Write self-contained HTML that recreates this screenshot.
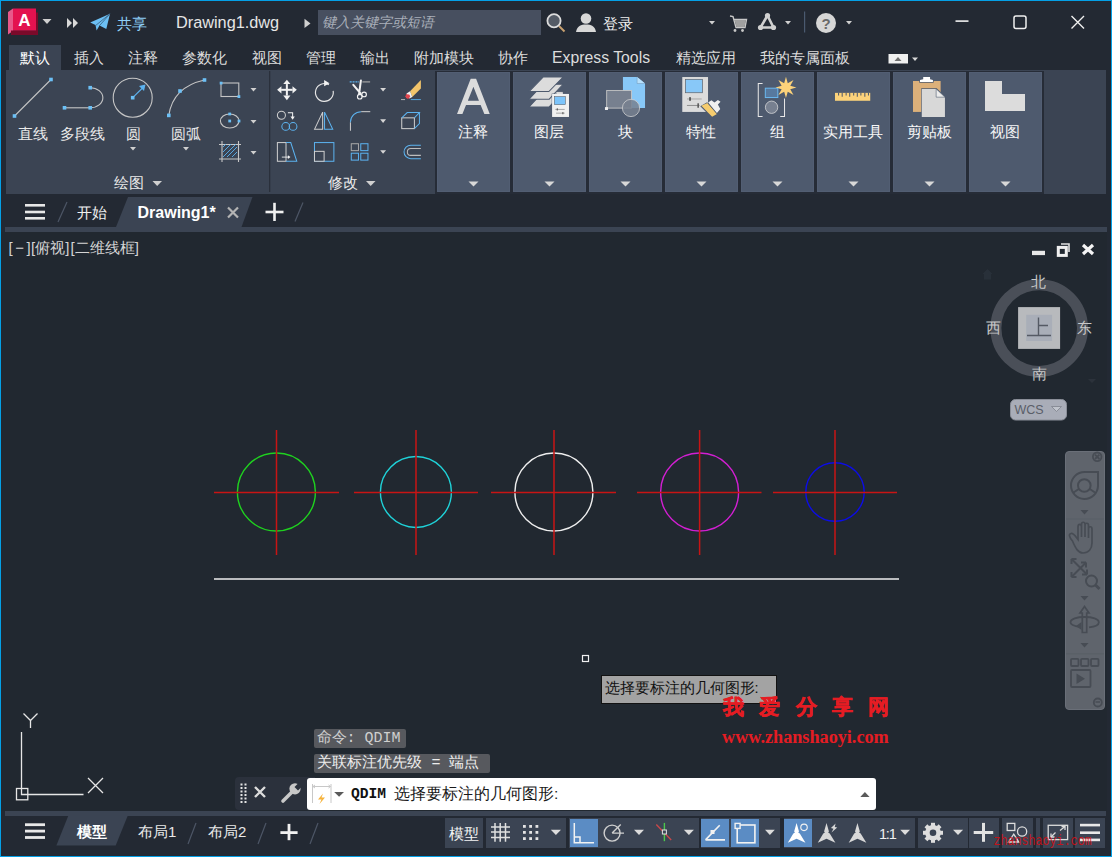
<!DOCTYPE html>
<html><head><meta charset="utf-8">
<style>
*{box-sizing:border-box;margin:0;padding:0}
html,body{width:1112px;height:857px;overflow:hidden;background:#232933;font-family:"Liberation Sans",sans-serif;}
.a{position:absolute}
.t{position:absolute;white-space:nowrap;color:#dcdcdc;font-size:15px;line-height:15px}
</style></head><body>
<!-- frame -->
<div class="a" style="left:0;top:0;width:1112px;height:857px;border:1px solid #04a0e6;"></div>


<!-- title bar -->
<svg class="a" style="left:0;top:0" width="84" height="40">
 <polygon points="8,12 13,8.5 13,31 8,34.5" fill="#e8588a"/>
 <rect x="11" y="30.5" width="27" height="4.5" fill="#7a0a2a"/>
 <rect x="36" y="12.5" width="2" height="22" fill="#7a0a2a"/>
 <rect x="13" y="8.5" width="23" height="22" fill="#e3124f"/>
 <text x="24.5" y="26" text-anchor="middle" font-family="Liberation Sans" font-weight="bold" font-size="17" fill="#fff">A</text>
 <polygon points="42.5,19 51.5,19 47,24" fill="#d0d0d0"/>
 <polygon points="67,18 72,23 67,28" fill="#d8d8d8"/>
 <polygon points="73,18 78,23 73,28" fill="#d8d8d8"/>
</svg>
<svg class="a" style="left:88px;top:11px" width="24" height="22">
 <polygon points="2.2,11.6 22,2.8 18.3,18 11.5,14.5 8.6,19.6 7.5,14" fill="#6cc0f5"/>
 <path d="M22,2.8 L8,14.2 M22,2.8 L11.2,15" stroke="#3d6a8c" stroke-width="0.9"/>
</svg>
<div class="t" style="left:117px;top:16px;color:#8fd0f8">共享</div>
<div class="t" style="left:176px;top:13px;color:#e6e6e6;font-size:16.3px;line-height:18px">Drawing1.dwg</div>
<svg class="a" style="left:300px;top:15px" width="14" height="16"><polygon points="4.5,3.7 10.5,8.5 4.5,13" fill="#d0d0d0"/></svg>
<div class="a" style="left:318px;top:10px;width:223px;height:25px;background:#474f5f"></div>
<div class="t" style="left:321.5px;top:14.5px;color:#aab0ba;font-style:italic;font-size:14px">键入关键字或短语</div>
<svg class="a" style="left:543px;top:10px" width="26" height="26">
 <line x1="16" y1="16" x2="21.5" y2="21.5" stroke="#c8a070" stroke-width="2"/>
 <circle cx="11" cy="10.8" r="6.6" fill="#545b66" stroke="#dcdcdc" stroke-width="1.8"/>
</svg>
<svg class="a" style="left:574px;top:11px" width="24" height="24">
 <circle cx="12" cy="7.5" r="5.3" fill="#d8d8d8"/>
 <path d="M2,21 C3,15 7,13.5 12,13.5 C17,13.5 21,15 22,21 Z" fill="#d8d8d8"/>
</svg>
<div class="t" style="left:603px;top:16px;color:#f0f0f0">登录</div>
<svg class="a" style="left:700px;top:5px" width="160" height="35">
 <polygon points="9,16 15,16 12,19.5" fill="#d0d0d0"/>
 <path d="M30,11 L33,11.5 L36,22.5 L45,22.5 L46.5,14.5 L34,14.5" fill="none" stroke="#c8c8c8" stroke-width="1.4"/>
 <polygon points="34.5,15 46,15 44.5,22 36.5,22" fill="#a0a0a0"/>
 <circle cx="35" cy="25.5" r="1.4" fill="#c8c8c8"/><circle cx="42.5" cy="25.5" r="1.4" fill="#c8c8c8"/>
 <path d="M67.5,10.5 L60.5,22.5 L73.5,22.5 Z" fill="none" stroke="#d0d0d0" stroke-width="2.6" stroke-linejoin="round"/>
 <circle cx="67.5" cy="10.5" r="2.6" fill="#d0d0d0"/><circle cx="60.5" cy="22.5" r="2.6" fill="#d0d0d0"/><circle cx="73.5" cy="22.5" r="2.6" fill="#d0d0d0"/>
 <polygon points="85,16 91,16 88,19.5" fill="#d0d0d0"/>
 <rect x="104" y="6.5" width="1.2" height="21" fill="#4a5a70"/>
 <circle cx="126" cy="18" r="10" fill="#d6d6d6"/>
 <text x="126" y="23.6" text-anchor="middle" font-family="Liberation Sans" font-weight="bold" font-size="15" fill="#6a6a6a">?</text>
 <polygon points="146,16 152,16 149,19.5" fill="#d0d0d0"/>
</svg>
<svg class="a" style="left:940px;top:5px" width="172" height="35">
 <rect x="15.5" y="15.3" width="13" height="1.6" fill="#f0f0f0"/>
 <rect x="74" y="11" width="12" height="12.5" rx="2" fill="none" stroke="#f0f0f0" stroke-width="1.5"/>
 <path d="M131.5,11 L144,23.5 M144,11 L131.5,23.5" stroke="#f0f0f0" stroke-width="1.4"/>
</svg>

<!-- ribbon tabs -->
<div class="a" style="left:9px;top:45px;width:52px;height:25px;background:#3b4453"></div>
<div class="t" style="left:20px;top:50px;color:#fff">默认</div>
<div class="t" style="left:74px;top:50px">插入</div>
<div class="t" style="left:128px;top:50px">注释</div>
<div class="t" style="left:182px;top:50px">参数化</div>
<div class="t" style="left:252px;top:50px">视图</div>
<div class="t" style="left:306px;top:50px">管理</div>
<div class="t" style="left:360px;top:50px">输出</div>
<div class="t" style="left:414px;top:50px">附加模块</div>
<div class="t" style="left:498px;top:50px">协作</div>
<div class="t" style="left:552px;top:49px;font-size:15.8px;line-height:17px">Express Tools</div>
<div class="t" style="left:676px;top:50px">精选应用</div>
<div class="t" style="left:760px;top:50px">我的专属面板</div>

<svg class="a" style="left:881px;top:47px" width="45" height="25">
 <rect x="7.5" y="7" width="19.5" height="9.5" fill="#f0f0f0"/>
 <polygon points="13.5,14 20.5,14 17,10" fill="#707070"/>
 <polygon points="31,10.5 37,10.5 34,14" fill="#d8d8d8"/>
</svg>
<!-- ribbon panel -->
<div class="a" style="left:6px;top:70px;width:1100px;height:124px;background:#3b4453"></div>


<!-- draw panel -->
<svg class="a" style="left:0;top:65px" width="440" height="135">
 <g fill="none" stroke="#c6c6c6" stroke-width="1.1">
  <line x1="14.5" y1="51" x2="51" y2="14.5"/>
  <line x1="64.5" y1="42.8" x2="90.2" y2="42.8"/>
  <path d="M90.2,22.7 A12.6,10 0 0 1 90.2,42.8"/>
  <circle cx="132.7" cy="32.7" r="19.5"/>
  <line x1="132.7" y1="32.7" x2="143" y2="22.5" stroke="#5cb3f0"/>
  <path d="M168.8,50.4 Q173,22 204.5,15"/>
  <rect x="221" y="18" width="17.8" height="13.5"/>
  <ellipse cx="229.7" cy="56" rx="9.3" ry="7"/>
  <path d="M219,79.5 L241,79.5 M219,94 L241,94 M222,76 L222,97 M238.5,76 L238.5,97"/>
 </g>
 <polygon points="145.5,19.5 139,21 144,26" fill="#5cb3f0"/>
 <g fill="#6cc0f6">
  <rect x="12.7" y="49.2" width="3.6" height="3.6"/><rect x="49.2" y="12.7" width="3.6" height="3.6"/>
  <rect x="62.7" y="41.0" width="3.6" height="3.6"/><rect x="88.4" y="41.0" width="3.6" height="3.6"/><rect x="88.4" y="20.9" width="3.6" height="3.6"/>
  <rect x="130.9" y="30.9" width="3.6" height="3.6"/>
  <rect x="167.0" y="48.6" width="3.6" height="3.6"/><rect x="178.2" y="24.2" width="3.6" height="3.6"/><rect x="202.7" y="13.2" width="3.6" height="3.6"/>
  <rect x="219.7" y="16.7" width="2.8" height="2.8"/><rect x="237.5" y="30.2" width="2.8" height="2.8"/>
  <rect x="228.3" y="54.6" width="2.8" height="2.8"/><rect x="228.3" y="47.6" width="2.8" height="2.8"/><rect x="237.6" y="54.6" width="2.8" height="2.8"/>
 </g>
 <g stroke="#5cb3f0" stroke-width="0.9">
  <path d="M223,92 L236,79 M223,87 L231,79 M227,92 L237,82 M232,92 L237,87 M223,82 L226,79"/>
 </g>
 <g fill="#d0d0d0">
  <polygon points="250.5,23 256.5,23 253.5,26.5"/>
  <polygon points="250.5,55 256.5,55 253.5,58.5"/>
  <polygon points="250.5,86 256.5,86 253.5,89.5"/>
  <polygon points="130,82 136,82 133,85.5"/>
  <polygon points="183,82 189,82 186,85.5"/>
  <polygon points="152.5,116 162,116 157.2,121"/>
  <polygon points="366,116 375.5,116 370.7,121"/>
 </g>
 <rect x="269" y="6" width="1.3" height="121" fill="#2a303b"/>
</svg>
<div class="t" style="left:18px;top:125.5px;color:#eaeaea">直线</div>
<div class="t" style="left:60px;top:125.5px;color:#eaeaea">多段线</div>
<div class="t" style="left:126px;top:125.5px;color:#eaeaea">圆</div>
<div class="t" style="left:171px;top:125.5px;color:#eaeaea">圆弧</div>
<div class="t" style="left:114px;top:175px;color:#eaeaea">绘图</div>
<div class="t" style="left:328px;top:175px;color:#eaeaea">修改</div>


<!-- modify panel icons (viewBox in 6.95x zoom coords) -->
<svg class="a" style="left:272px;top:74px" width="160" height="90" viewBox="0 0 1112 626">
 <g fill="#f2f2f2">
  <rect x="96" y="70" width="14" height="80"/><rect x="63" y="103" width="80" height="14"/>
  <polygon points="103,40 78,70 128,70"/><polygon points="103,182 78,150 128,150"/>
  <polygon points="35,110 65,85 65,135"/><polygon points="172,110 142,85 142,135"/>
 </g>
 <path d="M395,75 A62,62 0 1 0 425,118" fill="none" stroke="#e6e6e6" stroke-width="8"/>
 <polygon points="362,42 400,65 362,85" fill="#f2f2f2"/>
 <path d="M540,55 L605,55" stroke="#5cb3f0" stroke-width="8" stroke-dasharray="14,6"/>
 <path d="M628,55 L682,55" stroke="#a8a8a8" stroke-width="8"/>
 <path d="M565,75 L615,135 M618,45 L605,140" stroke="#f2f2f2" stroke-width="14" stroke-linecap="round"/>
 <circle cx="610" cy="158" r="16" fill="none" stroke="#f2f2f2" stroke-width="8"/>
 <circle cx="640" cy="142" r="16" fill="none" stroke="#f2f2f2" stroke-width="8"/>
 <polygon points="752,97 793,97 772,122" fill="#d6d6d6"/>
 <polygon points="960,120 1035,42 1035,100 975,160" fill="#f2c46a"/>
 <circle cx="945" cy="155" r="17" fill="#e0464e"/>
 <polygon points="935,135 960,120 975,160 955,170" fill="#f2f2f2"/>
 <circle cx="945" cy="155" r="15" fill="#e0464e"/>
 <path d="M897,178 L925,178" stroke="#c8c8c8" stroke-width="6"/>
 <path d="M965,178 L1035,178" stroke="#5cb3f0" stroke-width="6"/>

 <circle cx="65" cy="287" r="28" fill="none" stroke="#d0d0d0" stroke-width="7"/>
 <path d="M110,270 L143,270 L143,300" fill="none" stroke="#f2f2f2" stroke-width="7"/>
 <polygon points="128,295 158,295 143,318" fill="#f2f2f2"/>
 <circle cx="95" cy="365" r="27" fill="none" stroke="#5cb3f0" stroke-width="7"/>
 <circle cx="146" cy="365" r="27" fill="none" stroke="#5cb3f0" stroke-width="7"/>
 <polygon points="295,385 352,265 352,385" fill="none" stroke="#d0d0d0" stroke-width="7" stroke-linejoin="miter"/>
 <polygon points="365,385 365,265 422,385" fill="none" stroke="#5cb3f0" stroke-width="7"/>
 <path d="M545,395 L545,335" stroke="#d0d0d0" stroke-width="7" fill="none"/>
 <path d="M545,335 A75,75 0 0 1 620,262" stroke="#5cb3f0" stroke-width="7" fill="none"/>
 <path d="M620,262 L683,262" stroke="#d0d0d0" stroke-width="7"/>
 <polygon points="752,315 793,315 772,340" fill="#d6d6d6"/>
 <rect x="902" y="305" width="88" height="75" fill="none" stroke="#d0d0d0" stroke-width="7"/>
 <path d="M902,305 L940,268 L1025,268 L990,305 M1025,268 L1025,345 L990,380" fill="none" stroke="#5cb3f0" stroke-width="7"/>

 <rect x="37" y="477" width="60" height="130" fill="none" stroke="#d0d0d0" stroke-width="7"/>
 <path d="M97,477 L130,477 L172,607 L97,607" fill="none" stroke="#5cb3f0" stroke-width="7"/>
 <path d="M68,578 L115,578" stroke="#f2f2f2" stroke-width="6"/>
 <polygon points="110,565 128,578 110,591" fill="#f2f2f2"/>
 <rect x="295" y="477" width="135" height="130" fill="none" stroke="#5cb3f0" stroke-width="7"/>
 <rect x="295" y="538" width="67" height="69" fill="#3b4453" stroke="#d0d0d0" stroke-width="7"/>
 <rect x="551" y="485" width="50" height="48" fill="none" stroke="#a8a8a8" stroke-width="7"/>
 <rect x="617" y="485" width="50" height="48" fill="none" stroke="#5cb3f0" stroke-width="7"/>
 <rect x="551" y="551" width="50" height="48" fill="none" stroke="#5cb3f0" stroke-width="7"/>
 <rect x="617" y="551" width="50" height="48" fill="none" stroke="#5cb3f0" stroke-width="7"/>
 <polygon points="752,530 793,530 772,555" fill="#d6d6d6"/>
 <path d="M1035,495 L965,495 A47,47 0 0 0 965,589 L1035,589" fill="none" stroke="#5cb3f0" stroke-width="7"/>
 <path d="M1035,518 L965,518 A24,24 0 0 0 965,566 L1035,566" fill="none" stroke="#bdbdbd" stroke-width="7"/>
</svg>

<div class="a" style="left:435px;top:71px;width:77px;height:123px;background:#262c37"></div>
<div class="a" style="left:437px;top:72px;width:73px;height:120px;background:#4e5a6e;box-shadow:inset 0 0 0 1px #525e73"></div>
<div class="a" style="left:511px;top:71px;width:77px;height:123px;background:#262c37"></div>
<div class="a" style="left:513px;top:72px;width:73px;height:120px;background:#4e5a6e;box-shadow:inset 0 0 0 1px #525e73"></div>
<div class="a" style="left:587px;top:71px;width:77px;height:123px;background:#262c37"></div>
<div class="a" style="left:589px;top:72px;width:73px;height:120px;background:#4e5a6e;box-shadow:inset 0 0 0 1px #525e73"></div>
<div class="a" style="left:663px;top:71px;width:77px;height:123px;background:#262c37"></div>
<div class="a" style="left:665px;top:72px;width:73px;height:120px;background:#4e5a6e;box-shadow:inset 0 0 0 1px #525e73"></div>
<div class="a" style="left:739px;top:71px;width:77px;height:123px;background:#262c37"></div>
<div class="a" style="left:741px;top:72px;width:73px;height:120px;background:#4e5a6e;box-shadow:inset 0 0 0 1px #525e73"></div>
<div class="a" style="left:815px;top:71px;width:77px;height:123px;background:#262c37"></div>
<div class="a" style="left:817px;top:72px;width:73px;height:120px;background:#4e5a6e;box-shadow:inset 0 0 0 1px #525e73"></div>
<div class="a" style="left:891px;top:71px;width:77px;height:123px;background:#262c37"></div>
<div class="a" style="left:893px;top:72px;width:73px;height:120px;background:#4e5a6e;box-shadow:inset 0 0 0 1px #525e73"></div>
<div class="a" style="left:967px;top:71px;width:77px;height:123px;background:#262c37"></div>
<div class="a" style="left:969px;top:72px;width:73px;height:120px;background:#4e5a6e;box-shadow:inset 0 0 0 1px #525e73"></div>
<div class="t" style="left:436.5px;top:124px;width:73px;text-align:center;color:#f6f6f6">注释</div>
<svg class="a" style="left:468px;top:181px" width="11" height="6"><polygon points="0.5,0.5 10.5,0.5 5.5,5.5" fill="#d8d8d8"/></svg>
<div class="t" style="left:512.5px;top:124px;width:73px;text-align:center;color:#f6f6f6">图层</div>
<svg class="a" style="left:544px;top:181px" width="11" height="6"><polygon points="0.5,0.5 10.5,0.5 5.5,5.5" fill="#d8d8d8"/></svg>
<div class="t" style="left:588.5px;top:124px;width:73px;text-align:center;color:#f6f6f6">块</div>
<svg class="a" style="left:620px;top:181px" width="11" height="6"><polygon points="0.5,0.5 10.5,0.5 5.5,5.5" fill="#d8d8d8"/></svg>
<div class="t" style="left:664.5px;top:124px;width:73px;text-align:center;color:#f6f6f6">特性</div>
<svg class="a" style="left:696px;top:181px" width="11" height="6"><polygon points="0.5,0.5 10.5,0.5 5.5,5.5" fill="#d8d8d8"/></svg>
<div class="t" style="left:740.5px;top:124px;width:73px;text-align:center;color:#f6f6f6">组</div>
<svg class="a" style="left:772px;top:181px" width="11" height="6"><polygon points="0.5,0.5 10.5,0.5 5.5,5.5" fill="#d8d8d8"/></svg>
<div class="t" style="left:816.5px;top:124px;width:73px;text-align:center;color:#f6f6f6">实用工具</div>
<svg class="a" style="left:848px;top:181px" width="11" height="6"><polygon points="0.5,0.5 10.5,0.5 5.5,5.5" fill="#d8d8d8"/></svg>
<div class="t" style="left:892.5px;top:124px;width:73px;text-align:center;color:#f6f6f6">剪贴板</div>
<svg class="a" style="left:924px;top:181px" width="11" height="6"><polygon points="0.5,0.5 10.5,0.5 5.5,5.5" fill="#d8d8d8"/></svg>
<div class="t" style="left:968.5px;top:124px;width:73px;text-align:center;color:#f6f6f6">视图</div>
<svg class="a" style="left:1000px;top:181px" width="11" height="6"><polygon points="0.5,0.5 10.5,0.5 5.5,5.5" fill="#d8d8d8"/></svg>
<svg class="a" style="left:434px;top:72px" width="80" height="50" viewBox="0 0 1112 695">
 <path fill="#dcdcdc" fill-rule="evenodd" d="M320,585 L510,95 L585,95 L775,585 L700,585 L648,460 L445,460 L395,585 Z M470,400 L625,400 L548,205 Z"/>
</svg>
<svg class="a" style="left:510px;top:72px" width="80" height="50" viewBox="0 0 1112 695">
 <polygon points="265,485 460,275 738,275 545,485" fill="#dcdcdc" stroke="#4e5a6e" stroke-width="14"/>
 <polygon points="265,378 460,170 738,170 545,378" fill="#dcdcdc" stroke="#4e5a6e" stroke-width="14"/>
 <polygon points="265,272 460,70 738,70 540,272" fill="#dcdcdc" stroke="#4e5a6e" stroke-width="14"/>
 <rect x="580" y="300" width="245" height="330" fill="#4e5a6e"/>
 <rect x="650" y="280" width="85" height="30" fill="#dcdcdc"/>
 <rect x="585" y="305" width="235" height="320" fill="#f0f0f0"/>
 <rect x="617" y="342" width="152" height="112" fill="#7cc4fb" stroke="#5a6470" stroke-width="8"/>
 <path d="M630,520 L760,520 M640,572 L760,572" stroke="#707070" stroke-width="8"/>
 <rect x="650" y="505" width="14" height="30" fill="#505050"/><rect x="728" y="557" width="14" height="30" fill="#505050"/>
</svg>
<svg class="a" style="left:590px;top:72px" width="80" height="50" viewBox="0 0 1112 695">
 <polygon points="458,68 655,68 765,160 765,500 458,500" fill="#88c8f8"/>
 <polygon points="655,68 765,160 655,160" fill="#b8e0fb"/>
 <path d="M655,68 L655,160 L765,160" stroke="#6a8aa8" stroke-width="6" fill="none"/>
 <rect x="232" y="256" width="344" height="246" fill="#77808f" stroke="#c8c8c8" stroke-width="12"/>
 <circle cx="570" cy="500" r="120" fill="#77808f" fill-opacity="0.85" stroke="#d6d6d6" stroke-width="10"/>
 <rect x="208" y="488" width="42" height="40" fill="#f0f0f0"/>
</svg>
<svg class="a" style="left:665px;top:72px" width="80" height="50" viewBox="0 0 1112 695">
 <rect x="240" y="70" width="358" height="485" fill="#dcdcdc"/>
 <rect x="284" y="102" width="236" height="186" fill="#88c8f8" stroke="#5e6670" stroke-width="10"/>
 <path d="M305,375 L510,375" stroke="#a8a8a8" stroke-width="14"/>
 <rect x="335" y="350" width="26" height="50" fill="#5a5a5a"/>
 <path d="M305,465 L480,465" stroke="#555" stroke-width="8"/>
 <rect x="450" y="435" width="22" height="62" fill="#5a5a5a"/>
 <polygon points="490,475 585,420 735,590 650,635" fill="#4e5a6e"/>
 <polygon points="505,470 590,430 722,585 655,622" fill="#f6cc6e"/>
 <polygon points="590,430 650,385 690,415 740,375 785,410 745,455 780,520 722,585" fill="#4e5a6e"/>
 <polygon points="600,425 645,392 688,425 735,388 772,412 735,452 768,515 722,570" fill="#f0f0f0"/>
</svg>
<svg class="a" style="left:741px;top:72px" width="80" height="50" viewBox="0 0 1112 695">
 <path d="M300,160 L240,160 L240,620 L300,620 M545,620 L605,620 L605,370" fill="none" stroke="#e8e8e8" stroke-width="14"/>
 <rect x="338" y="225" width="174" height="130" fill="#57799f" stroke="#6ab8f0" stroke-width="14"/>
 <circle cx="425" cy="490" r="86" fill="#778090" stroke="#e0e0e0" stroke-width="10"/>
 <polygon id="star" fill="#fcd27a" points="625,65 650,155 730,110 685,190 770,215 685,240 730,320 650,275 625,360 600,275 520,320 565,240 480,215 565,190 520,110 600,155"/>
</svg>
<svg class="a" style="left:817px;top:72px" width="80" height="50" viewBox="0 0 1112 695">
 <rect x="250" y="290" width="490" height="110" fill="#fcd27a"/>
 <path d="M300,290 L300,325 M350,290 L350,345 M405,290 L405,325 M455,290 L455,345 M510,290 L510,325 M560,290 L560,345 M610,290 L610,325 M665,290 L665,345 M715,290 L715,325" stroke="#4a556a" stroke-width="14"/>
</svg>
<svg class="a" style="left:893px;top:72px" width="80" height="50" viewBox="0 0 1112 695">
 <rect x="278" y="125" width="384" height="430" fill="#dcb07a"/>
 <polygon points="365,148 365,105 410,95 410,62 525,62 525,95 565,105 565,148" fill="#4e5a6e"/>
 <polygon points="375,140 375,110 420,100 420,70 515,70 515,100 555,110 555,140" fill="#ffffff"/>
 <polygon points="392,227 608,227 730,345 730,633 392,633" fill="#4e5a6e"/>
 <polygon points="400,235 600,235 722,350 722,625 400,625" fill="#d8d8d8"/>
 <polygon points="600,235 722,350 600,350" fill="#ececec" stroke="#4e5a6e" stroke-width="8"/>
</svg>
<svg class="a" style="left:969px;top:72px" width="73" height="50"><polygon points="16,9 33,9 33,22 56,22 56,39 16,39" fill="#dcdcdc"/></svg>


<!-- file tab bar -->
<svg class="a" style="left:0;top:194px" width="320" height="33">
 <g fill="#e8e8e8"><rect x="25" y="10" width="20" height="2.6"/><rect x="25" y="16.7" width="20" height="2.6"/><rect x="25" y="23" width="20" height="2.6"/></g>
 <line x1="58" y1="28" x2="67" y2="8" stroke="#4d5666" stroke-width="1.2"/>
 <polygon points="116,33 128,3 252.5,3 241.5,33" fill="#3b4453"/>
 <path d="M228,13.5 L238,23.5 M238,13.5 L228,23.5" stroke="#b4b4b4" stroke-width="2.2"/>
 <rect x="265.5" y="16.7" width="18" height="2.6" fill="#f0f0f0"/>
 <rect x="273.2" y="8.8" width="2.6" height="18.2" fill="#f0f0f0"/>
 <line x1="295" y1="27.6" x2="303" y2="8.4" stroke="#4d5666" stroke-width="1.2"/>
</svg>
<div class="t" style="left:77px;top:205px;color:#f0f0f0">开始</div>
<div class="t" style="left:137.5px;top:204px;color:#ffffff;font-weight:bold;font-size:16px;line-height:18px">Drawing1*</div>

<!-- tab bar strip -->
<div class="a" style="left:5px;top:227px;width:1102px;height:5px;background:#3b4453"></div>
<!-- viewport -->
<div class="a" style="left:1px;top:232px;width:1106px;height:579px;background:#212830"></div>

<!-- viewport content -->
<div class="t" style="left:8.6px;top:240px;color:#d4d4d4;letter-spacing:2.5px">[−]</div>
<div class="t" style="left:31px;top:240px;color:#d4d4d4">[俯视]</div>
<div class="t" style="left:70.5px;top:240px;color:#d4d4d4">[二维线框]</div>
<svg class="a" style="left:1025px;top:238px" width="75" height="22">
 <rect x="7" y="12.8" width="13" height="4.3" fill="#e8e8e8"/>
 <path d="M36,6 L44,6 L44,14" fill="none" stroke="#e0e0e0" stroke-width="1.6"/>
 <rect x="33.3" y="9.4" width="8" height="8" fill="none" stroke="#f0f0f0" stroke-width="3"/>
 <path d="M58,7 L68,16 M68,7 L58,16" stroke="#f4f4f4" stroke-width="3.2"/>
</svg>
<svg class="a" style="left:980px;top:270px" width="120" height="160">
 <circle cx="59.2" cy="58.1" r="43.3" fill="none" stroke="#4a4f58" stroke-width="11"/>
 <rect x="38.1" y="37.1" width="42" height="41.8" fill="#b8babd"/>
 <rect x="46.2" y="44.8" width="25.9" height="26.2" fill="#a9aeb8"/>
 <path d="M47,65.5 L71,65.5 M58.5,47.5 L58.5,65.5 M58.5,55.5 L68,55.5" stroke="#555a64" stroke-width="1.4" fill="none"/>
 <rect x="30.5" y="129.5" width="56" height="20.5" rx="5" fill="#a9adb8" stroke="#8a8e98" stroke-width="1"/>
 <text x="34.5" y="143.7" font-family="Liberation Sans" font-size="12.5" fill="#5a5e68">WCS</text>
 <polygon points="71.5,136.5 81.5,136.5 76.5,141.5" fill="#c0c4cc" stroke="#7d818b" stroke-width="0.8"/>
 <polygon points="108,109 116,109 112,113" fill="#2c323b"/>
</svg>
<svg class="a" style="left:980px;top:266px" width="16" height="16"><path d="M2.5,8 L7.5,3 L12.5,8 L11,8 L11,13.5 L4,13.5 L4,8 Z" fill="#283039"/></svg>
<div class="t" style="left:1031px;top:275px;color:#c8c8c8;font-family:'Liberation Serif',serif">北</div>
<div class="t" style="left:986px;top:321px;color:#c8c8c8;font-family:'Liberation Serif',serif">西</div>
<div class="t" style="left:1077px;top:321px;color:#c8c8c8;font-family:'Liberation Serif',serif">东</div>
<div class="t" style="left:1031.5px;top:367px;color:#c8c8c8;font-family:'Liberation Serif',serif">南</div>

<!-- nav bar -->
<div class="a" style="left:1065px;top:451px;width:40px;height:259px;background:#5f646c;border:1px solid #6a6f78;border-radius:4px"></div>
<svg class="a" style="left:1060px;top:445px" width="50" height="270">
 <g fill="none" stroke="#474c54" stroke-width="1.8">
  <circle cx="37.2" cy="11.8" r="4.3"/><path d="M35,9.6 L39.4,14 M39.4,9.6 L35,14"/>
  <path d="M38,27 L38,41 A13.5,13.5 0 1 1 24.5,27 Z" stroke-width="2"/>
  <circle cx="24.3" cy="40.5" r="6.3" stroke-width="2"/>
  <path d="M13.5,47.5 L18.8,44 M35,47.5 L29.8,44" stroke-width="2"/>
  <line x1="6" y1="74" x2="44" y2="74" stroke="#595e66" stroke-width="1"/>
  <path d="M12.5,96 C9,92 8.5,89 11,88.5 C13.5,88 16,92 18,94.5 L18,82 C18,78.5 21.5,78.5 21.5,82 L21.5,92 L21.5,79.5 C21.5,76.5 25,76.5 25,79.5 L25,92 L25,80.5 C25,77.5 28.5,77.5 28.5,80.5 L28.5,93 L28.5,84 C28.5,81 32,81 32,84 L32,98 C32,104 28.5,108 23,108 C18,108 15.5,103 12.5,96 Z" stroke-width="1.7"/>
  <path d="M11.5,114 L27,129.5 M11.5,132 L26,117.5" stroke-width="2"/>
  <circle cx="31.5" cy="136" r="5.5" stroke-width="2"/><path d="M35.5,140 L39.5,144" stroke-width="3"/>
  <path d="M20,168 L24.5,161.5 L29,168 L26.7,168 L26.7,187.5 L22.3,187.5 L22.3,168 Z" stroke-width="1.7"/>
  <path d="M20.5,182 C14,181 10.5,179.5 10.5,177.4 C10.5,174 17,172 24.6,172 C32.5,172 38.8,174 38.8,177.4 C38.8,179.8 35,181.5 29,182.3" stroke-width="1.8"/>
  <line x1="6" y1="208.8" x2="44" y2="208.8" stroke="#595e66" stroke-width="1"/>
  <rect x="11" y="213.8" width="7.5" height="7.2" rx="1"/><rect x="21" y="213.8" width="7.5" height="7.2" rx="1"/><rect x="31" y="213.8" width="7.5" height="7.2" rx="1"/>
  <rect x="11" y="225" width="19.5" height="17" rx="1"/>
  <circle cx="37.8" cy="257.5" r="4"/><path d="M35.5,257 L40,257" stroke-width="1.5"/>
 </g>
 <polygon points="16.5,228.5 16.5,239 25,233.8" fill="#474c54"/>
 <polygon points="16,181 21.5,177 21.5,185" fill="#474c54"/>
 <path d="M11.5,114 L11.5,119 M11.5,114 L16.5,114 M27,129.5 L27,124.5 M27,129.5 L22,129.5 M11.5,132 L11.5,127 M11.5,132 L16.5,132 M26,117.5 L26,122.5 M26,117.5 L21,117.5" stroke="#474c54" stroke-width="2" fill="none"/>
 <g fill="#474c54">
  <polygon points="20.5,65 28.5,65 24.5,69.5"/><polygon points="20.5,151 28.5,151 24.5,155.5"/><polygon points="20.5,198 28.5,198 24.5,202.5"/>
 </g>
</svg>


<!-- drawing -->
<svg class="a" style="left:0;top:0" width="1112" height="857">
 <g fill="none" stroke-width="1.4">
  <circle cx="276.4" cy="492" r="39" stroke="#1fd21f"/>
  <circle cx="415.9" cy="492" r="35.5" stroke="#1fd2d8"/>
  <circle cx="553.9" cy="492" r="39" stroke="#eeeeee"/>
  <circle cx="699.6" cy="492" r="39" stroke="#d21fd2"/>
  <circle cx="835" cy="492" r="29.2" stroke="#0c0ce6"/>
 </g>
 <g stroke="#c81414" stroke-width="1.5">
  <path d="M214,492.4 L339,492.4 M276.5,430 L276.5,555"/>
  <path d="M354,492.4 L478,492.4 M416,430 L416,555"/>
  <path d="M491,492.4 L616,492.4 M554,430 L554,555"/>
  <path d="M637,492.4 L761.5,492.4 M699.6,430 L699.6,555"/>
  <path d="M773,492.4 L897,492.4 M835,430 L835,555"/>
 </g>
 <line x1="214" y1="579" x2="899" y2="579" stroke="#eeeeee" stroke-width="1.4"/>
 <rect x="582.5" y="655.5" width="6" height="6" fill="none" stroke="#f0f0f0" stroke-width="1.2"/>
 <g stroke="#e6e6e6" stroke-width="1.3" fill="none">
  <path d="M21.5,732 L21.5,794.5 L83.5,794.5"/>
  <rect x="16.5" y="788.5" width="11.3" height="11.3"/>
  <path d="M23.5,713.5 L30.5,720.5 L37.5,713.5 M30.5,720.5 L30.5,728"/>
  <path d="M88,778 L103,793 M103,778 L88,793"/>
 </g>
</svg>
<div class="a" style="left:601px;top:675px;width:176px;height:28.5px;background:#a3a3a3;border:1.6px solid #121212"></div>
<div class="t" style="left:604.5px;top:680.5px;color:#111;font-size:14.5px;line-height:15px">选择要标注的几何图形:</div>
<div class="t" style="left:723px;top:695.5px;color:#e51c23;font-size:21px;line-height:22px;font-weight:bold;letter-spacing:15.3px;-webkit-text-stroke:0.4px #e51c23">我爱分享网</div>
<div class="t" style="left:722px;top:728px;color:#e51c23;font-size:18.2px;line-height:18px;font-weight:bold;font-family:'Liberation Serif',serif">www.zhanshaoyi.com</div>

<!-- bottom strip -->
<div class="a" style="left:5px;top:811px;width:1101px;height:5px;background:#3b4453"></div>

<!-- command line -->
<div class="a" style="left:314px;top:729px;width:91.5px;height:18.5px;background:#57595e;border-radius:2px"></div>
<div class="a" style="left:314px;top:754px;width:176px;height:18.8px;background:#57595e;border-radius:2px"></div>
<div class="t" style="left:316.5px;top:730.5px;color:#cfcfcf;font-family:'Liberation Mono',monospace">命令: QDIM</div>
<div class="t" style="left:317.4px;top:755.5px;color:#ededed;font-family:'Liberation Mono',monospace">关联标注优先级 = 端点</div>
<div class="a" style="left:235px;top:777px;width:80px;height:33px;background:#2b313c;border-radius:4px 0 0 4px"></div>
<div class="a" style="left:306.8px;top:778px;width:569.2px;height:32px;background:#ffffff;border-radius:3px"></div>
<svg class="a" style="left:235px;top:777px" width="642" height="34">
 <g fill="#e4e4e4">
  <rect x="5.5" y="6.5" width="2" height="2"/><rect x="9.5" y="6.5" width="2" height="2"/>
  <rect x="5.5" y="10" width="2" height="2"/><rect x="9.5" y="10" width="2" height="2"/>
  <rect x="5.5" y="13.5" width="2" height="2"/><rect x="9.5" y="13.5" width="2" height="2"/>
  <rect x="5.5" y="17" width="2" height="2"/><rect x="9.5" y="17" width="2" height="2"/>
  <rect x="5.5" y="20.5" width="2" height="2"/><rect x="9.5" y="20.5" width="2" height="2"/>
  <rect x="5.5" y="24" width="2" height="2"/><rect x="9.5" y="24" width="2" height="2"/>
 </g>
 <path d="M20,10 L30,20 M30,10 L20,20" stroke="#dcdcdc" stroke-width="2.4"/>
 <path d="M48,24 L57.5,14.5" stroke="#c8c8c8" stroke-width="3.6" stroke-linecap="round"/>
 <circle cx="60" cy="11.8" r="5.6" fill="#c8c8c8"/>
 <polygon points="59.5,10 64,5.5 67.5,9 63,13.5" fill="#2b313c"/>
 <path d="M77.5,7 L77.5,26 M96,7 L96,26 M78,9.5 L95.5,9.5" stroke="#c8c8c8" stroke-width="1"/>
 <path d="M80,8 L78,9.5 L80,11 M93.5,8 L95.5,9.5 L93.5,11" stroke="#c8c8c8" stroke-width="1" fill="none"/>
 <polygon points="88,16.5 83,22.5 86.5,22.5 84.5,27 90,20.5 86.5,20.5" fill="#f6b23a"/>
 <polygon points="99.2,15.1 109,15.1 104.1,19.7" fill="#5a5a5a"/>
 <polygon points="625.3,20 634.6,20 629.9,15" fill="#5a5a5a"/>
</svg>
<div class="t" style="left:351px;top:786.5px;color:#111;font-family:'Liberation Mono',monospace;font-weight:bold;font-size:14.6px">QDIM</div>
<div class="t" style="left:394px;top:786px;color:#1a1a1a;font-size:15.5px;line-height:16px">选择要标注的几何图形:</div>




<!-- layout tabs -->
<svg class="a" style="left:0;top:816px" width="330" height="40">
 <g fill="#e8e8e8"><rect x="25" y="7.3" width="20" height="2.8"/><rect x="25" y="13.7" width="20" height="2.8"/><rect x="25" y="20.1" width="20" height="2.8"/></g>
 <polygon points="56.4,29.5 68.2,0 127.6,0 115.7,29.5" fill="#3b4453"/>
 <line x1="188" y1="28" x2="196" y2="7" stroke="#4d5666" stroke-width="1.2"/>
 <line x1="258" y1="28" x2="266" y2="7" stroke="#4d5666" stroke-width="1.2"/>
 <line x1="310" y1="28" x2="318" y2="7" stroke="#4d5666" stroke-width="1.2"/>
 <rect x="280.4" y="15.2" width="17.2" height="2.8" fill="#f0f0f0"/>
 <rect x="287.6" y="7.9" width="2.8" height="16.3" fill="#f0f0f0"/>
</svg>
<div class="t" style="left:77px;top:824px;color:#fff;font-weight:bold">模型</div>
<div class="t" style="left:138px;top:824px;color:#e8e8e8">布局1</div>
<div class="t" style="left:208px;top:824px;color:#e8e8e8">布局2</div>

<!-- status bar -->
<div class="a" style="left:445px;top:818px;width:38px;height:30px;background:#3b4453"></div>
<div class="a" style="left:486px;top:818px;width:80px;height:30px;background:#3b4453"></div>
<div class="a" style="left:568.6px;top:818px;width:130.4px;height:30px;background:#3b4453"></div>
<div class="a" style="left:700.6px;top:818px;width:79.4px;height:30px;background:#3b4453"></div>
<div class="a" style="left:783.8px;top:818px;width:131px;height:30px;background:#3b4453"></div>
<div class="a" style="left:918px;top:818px;width:50px;height:30px;background:#3b4453"></div>
<div class="a" style="left:969.2px;top:818px;width:29.5px;height:30px;background:#3b4453"></div>
<div class="a" style="left:1002px;top:818px;width:31px;height:30px;background:#3b4453"></div>
<div class="a" style="left:1036px;top:818px;width:4px;height:30px;background:#3b4453"></div>
<div class="a" style="left:1042.8px;top:818px;width:30px;height:30px;background:#3b4453"></div>
<div class="a" style="left:1075.2px;top:818px;width:29.6px;height:30px;background:#3b4453"></div>
<div class="a" style="left:570px;top:819px;width:27.8px;height:28.2px;background:#5b8cc4"></div>
<div class="a" style="left:700.6px;top:819px;width:28.4px;height:28.2px;background:#5b8cc4"></div>
<div class="a" style="left:730.7px;top:819px;width:28.2px;height:28.2px;background:#5b8cc4"></div>
<div class="a" style="left:783.8px;top:819px;width:28.3px;height:28.2px;background:#5b8cc4"></div>
<div class="t" style="left:449px;top:826px;color:#f4f4f4">模型</div>
<div class="t" style="left:879px;top:826px;color:#f0f0f0;font-size:14.5px;line-height:16px;letter-spacing:-1.2px">1:1</div>
<svg class="a" style="left:440px;top:814px" width="672" height="40">
 <g stroke="#e0e0e0" stroke-width="1.5" fill="none">
  <path d="M55,8.9 L55,27.8 M60.2,8.9 L60.2,27.8 M65.5,8.9 L65.5,27.8 M51,13 L70,13 M51,18 L70,18 M51,23.5 L70,23.5"/>
 </g>
 <g fill="#e4e4e4">
  <rect x="83" y="11" width="2.8" height="2.8"/><rect x="89.2" y="11" width="2.8" height="2.8"/><rect x="95.5" y="11" width="2.8" height="2.8"/>
  <rect x="83" y="17" width="2.8" height="2.8"/><rect x="89.2" y="17" width="2.8" height="2.8"/><rect x="95.5" y="17" width="2.8" height="2.8"/>
  <rect x="83" y="23.2" width="2.8" height="2.8"/><rect x="89.2" y="23.2" width="2.8" height="2.8"/><rect x="95.5" y="23.2" width="2.8" height="2.8"/>
 </g>
 <g fill="#dcdcdc">
  <polygon points="110.8,15.7 121,15.7 115.9,21"/>
  <polygon points="194,15.7 204,15.7 199,21"/>
  <polygon points="243.8,15.7 253.9,15.7 248.9,21"/>
  <polygon points="325,15.7 334.8,15.7 329.9,21"/>
  <polygon points="460.3,15.7 470,15.7 465.1,21"/>
  <polygon points="513,15.7 523.1,15.7 518,21"/>
 </g>
 <g stroke="#f2f2f2" stroke-width="1.5" fill="none">
  <path d="M134.3,8.9 L134.3,28.8 L154,28.8 M134.3,23 L140,23 L140,28.8"/>
 </g>
 <g stroke="#cfcfcf" stroke-width="1.4" fill="none">
  <circle cx="172.1" cy="19.1" r="8"/>
  <path d="M172.1,19.1 L184,19.1 M172.1,19.1 L180.7,10.5"/>
 </g>
 <path d="M216.3,10.5 L231.2,25.9" stroke="#c8484a" stroke-width="1.4"/>
 <path d="M224.4,8.9 L224.4,27.2" stroke="#4cc84c" stroke-width="1.4"/>
 <rect x="222.4" y="16" width="4" height="4" fill="#3b4453" stroke="#e0e0e0" stroke-width="1"/>
 <g stroke="#f2f2f2" stroke-width="1.6" fill="none">
  <path d="M265.5,25.9 L279.7,11.3 M265.5,25.9 L285,25.9"/>
  <rect x="297.2" y="11" width="17.7" height="17.8"/>
 </g>
 <rect x="270.5" y="16" width="4" height="4" fill="#f2f2f2"/>
 <rect x="295.1" y="9.4" width="5" height="5" fill="#5b8cc4" stroke="#f2f2f2" stroke-width="1.4"/>
 <g transform="translate(493,18.8)">
  <circle r="7.8" fill="#dedede"/>
  <g fill="#dedede"><rect x="-2" y="-10" width="4" height="20"/><rect x="-2" y="-10" width="4" height="20" transform="rotate(45)"/><rect x="-2" y="-10" width="4" height="20" transform="rotate(90)"/><rect x="-2" y="-10" width="4" height="20" transform="rotate(135)"/></g>
  <circle r="3.3" fill="#3b4453"/>
 </g>
 <rect x="533.7" y="17" width="19.5" height="3" fill="#e2e2e2"/>
 <rect x="542" y="8.9" width="3" height="18.9" fill="#e2e2e2"/>
 <g stroke="#dcdcdc" stroke-width="1.3" fill="none">
  <rect x="567.2" y="9.4" width="7.6" height="7.1"/>
  <circle cx="582.1" cy="17.5" r="4.6"/>
  <path d="M573.7,20.2 L578.8,28 L568.6,28 Z"/>
  <rect x="608.2" y="11.3" width="19.4" height="14.3"/>
  <path d="M615.5,18.5 L611,23 M620,16.5 L625,12.5"/>
 </g>
 <path d="M611,19.5 L611,23 L614.5,23 M621.5,12.5 L625,12.5 L625,16" stroke="#dcdcdc" stroke-width="1.3" fill="none"/>
 <g fill="#e8e8e8"><rect x="640" y="9.8" width="20" height="2.6"/><rect x="640" y="17.4" width="20" height="2.6"/><rect x="640" y="24.6" width="20" height="2.6"/></g>
</svg>
<div class="t" style="left:993.5px;top:832px;color:rgba(225,10,15,0.82);font-family:'Liberation Mono',monospace;font-size:11.7px;line-height:14px;transform:scaleY(1.25);transform-origin:0 0">zhanshaoyi.com</div>

<svg class="a" style="left:782px;top:816px" width="90" height="34" viewBox="0 0 1112 420">
 <path fill="#ffffff" d="M180,85 L210,190 L200,205 L220,215 L290,330 L180,280 L72,330 L140,215 L160,205 L150,190 Z"/>
 <circle cx="272" cy="140" r="40" fill="none" stroke="#f2f2f2" stroke-width="14"/>
 <path fill="#d8d8d8" d="M550,85 L580,190 L570,205 L590,215 L660,330 L550,280 L442,330 L510,215 L530,205 L520,190 Z"/>
 <polygon fill="#d8d8d8" points="662,92 605,148 636,158 612,205 682,142 652,135"/>
 <path fill="#d8d8d8" d="M932,85 L962,190 L952,205 L972,215 L1042,330 L932,280 L824,330 L892,215 L912,205 L902,190 Z"/>
</svg>
</body></html>
